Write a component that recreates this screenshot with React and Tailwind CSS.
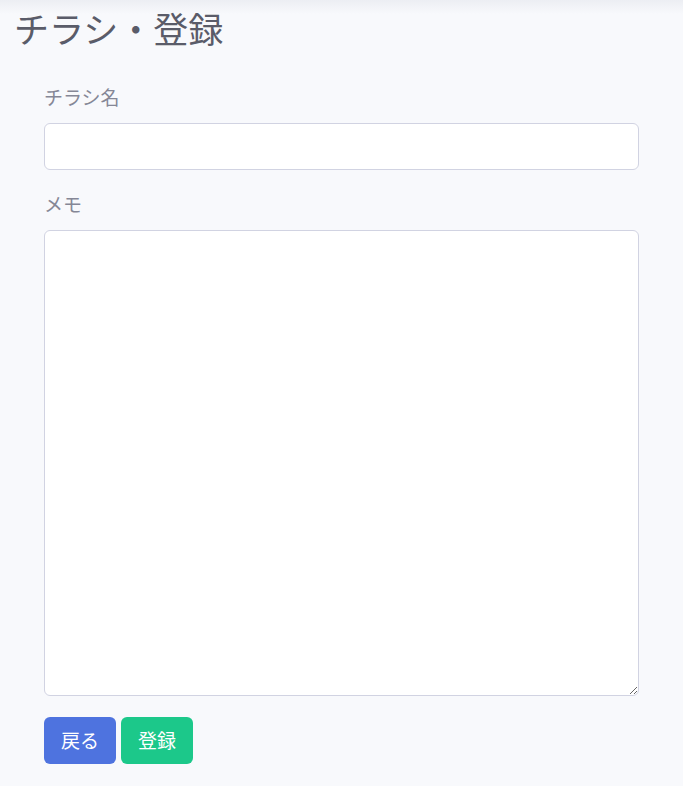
import React from 'react';

const App = () => {
  return (
    <div
      className="min-h-screen bg-[#f8f9fc] bg-[linear-gradient(to_bottom,#eceef3,#f8f9fc_14px)] text-[#858796]"
      style={{ fontFamily: '"Noto Sans CJK JP", "Noto Sans", sans-serif' }}
    >
      {/* Page heading */}
      <h1 className="px-[14px] pt-[7px] text-[35px] leading-[42px] font-normal text-[#5a5c69]">
        チラシ・登録
      </h1>

      <form className="px-[44px] mt-[34px]">
        <div className="mb-5">
          <label className="block h-7 mb-3 text-[19px] leading-7">チラシ名</label>
          <input
            type="text"
            className="block w-full h-[47px] px-3 bg-white border border-[#d1d3e2] rounded-[6px] text-[#6e707e] outline-none"
          />
        </div>

        <div>
          <label className="block h-7 mb-3 text-[19px] leading-7">メモ</label>
          <textarea className="block w-full h-[466px] px-3 py-2 bg-white border border-[#d1d3e2] rounded-[6px] text-[#6e707e] outline-none" />
        </div>

        <div className="flex gap-[5px] mt-[21px]">
          <button
            type="button"
            className="w-[72px] h-[47px] rounded-[6px] bg-[#4e73df] text-white text-[19px]"
          >
            戻る
          </button>
          <button
            type="button"
            className="w-[72px] h-[47px] rounded-[6px] bg-[#1cc88a] text-white text-[19px]"
          >
            登録
          </button>
        </div>
      </form>
    </div>
  );
};

export default App;
